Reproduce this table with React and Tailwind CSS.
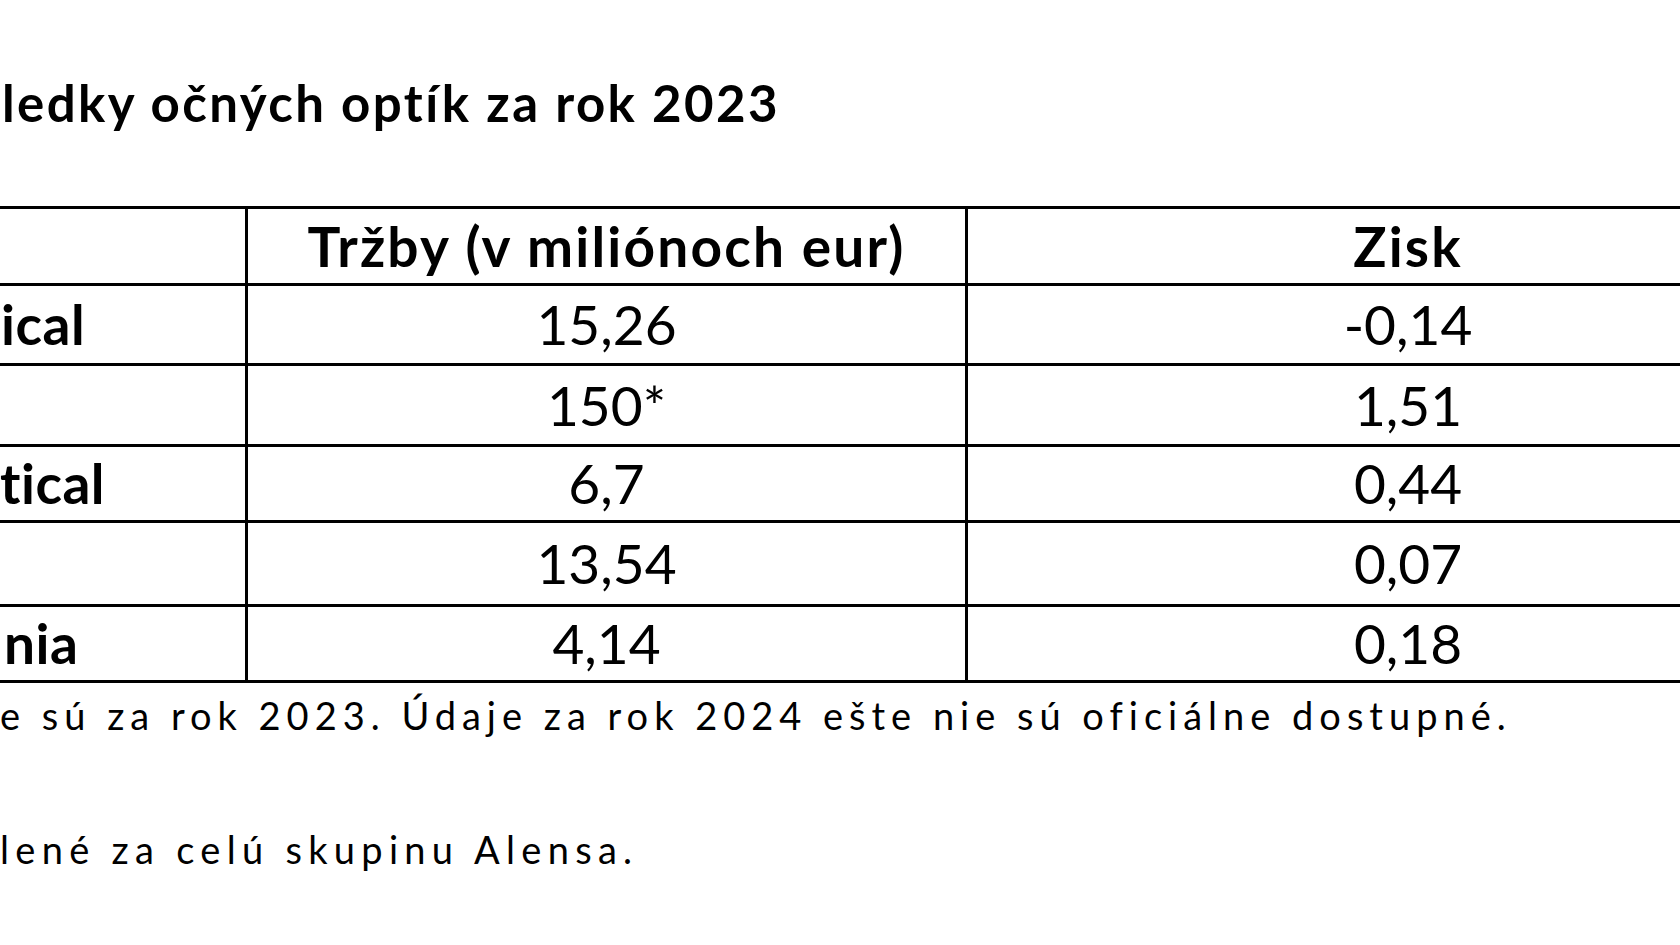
const rows = [
  { name: "ical", nameClass: "pl-[1px]", sales: "15,26", profit: "-0,14", h: "h-[80px]" },
  { name: "", nameClass: "", sales: "150*", profit: "1,51", h: "h-[81px]" },
  { name: "tical", nameClass: "pl-0", sales: "6,7", profit: "0,44", h: "h-[76px]" },
  { name: "", nameClass: "", sales: "13,54", profit: "0,07", h: "h-[84px]" },
  { name: "nia", nameClass: "pl-[4px]", sales: "4,14", profit: "0,18", h: "h-[76px]" },
];

const App = () => {
  return (
    <div className="w-full h-screen overflow-hidden bg-white text-black font-['Lato','Liberation_Sans',sans-serif]">
      <h1 className="pt-[77px] pl-[2px] text-[51px] leading-none font-bold tracking-[2.4px] whitespace-nowrap">
        ledky očných optík za rok 2023
      </h1>

      <div className="mt-[78px] w-[1900px] border-t-[3px] border-black">
        <div className="flex h-[77px] border-b-[3px] border-black text-[55px] font-bold tracking-[2.2px]">
          <div className="w-[248px] shrink-0 border-r-[3px] border-black"></div>
          <div className="w-[720px] shrink-0 border-r-[3px] border-black flex items-center justify-center">
            Tržby (v miliónoch eur)
          </div>
          <div className="w-[880px] shrink-0 flex items-center justify-center">Zisk</div>
        </div>

        {rows.map((r, i) => (
          <div key={i} className={`flex ${r.h} border-b-[3px] border-black text-[55px]`}>
            <div className={`w-[248px] shrink-0 border-r-[3px] border-black flex items-center font-bold tracking-[0.5px] ${r.nameClass}`}>
              {r.name}
            </div>
            <div className="w-[720px] shrink-0 border-r-[3px] border-black flex items-center justify-center">
              {r.sales}
            </div>
            <div className="w-[880px] shrink-0 flex items-center justify-center">{r.profit}</div>
          </div>
        ))}
      </div>

      <p className="mt-[13px] text-[38px] leading-none tracking-[6px] whitespace-nowrap">
        e sú za rok 2023. Údaje za rok 2024 ešte nie sú oficiálne dostupné.
      </p>
      <p className="mt-[96px] text-[38px] leading-none tracking-[6.3px] whitespace-nowrap">
        lené za celú skupinu Alensa.
      </p>
    </div>
  );
};

export default App;
